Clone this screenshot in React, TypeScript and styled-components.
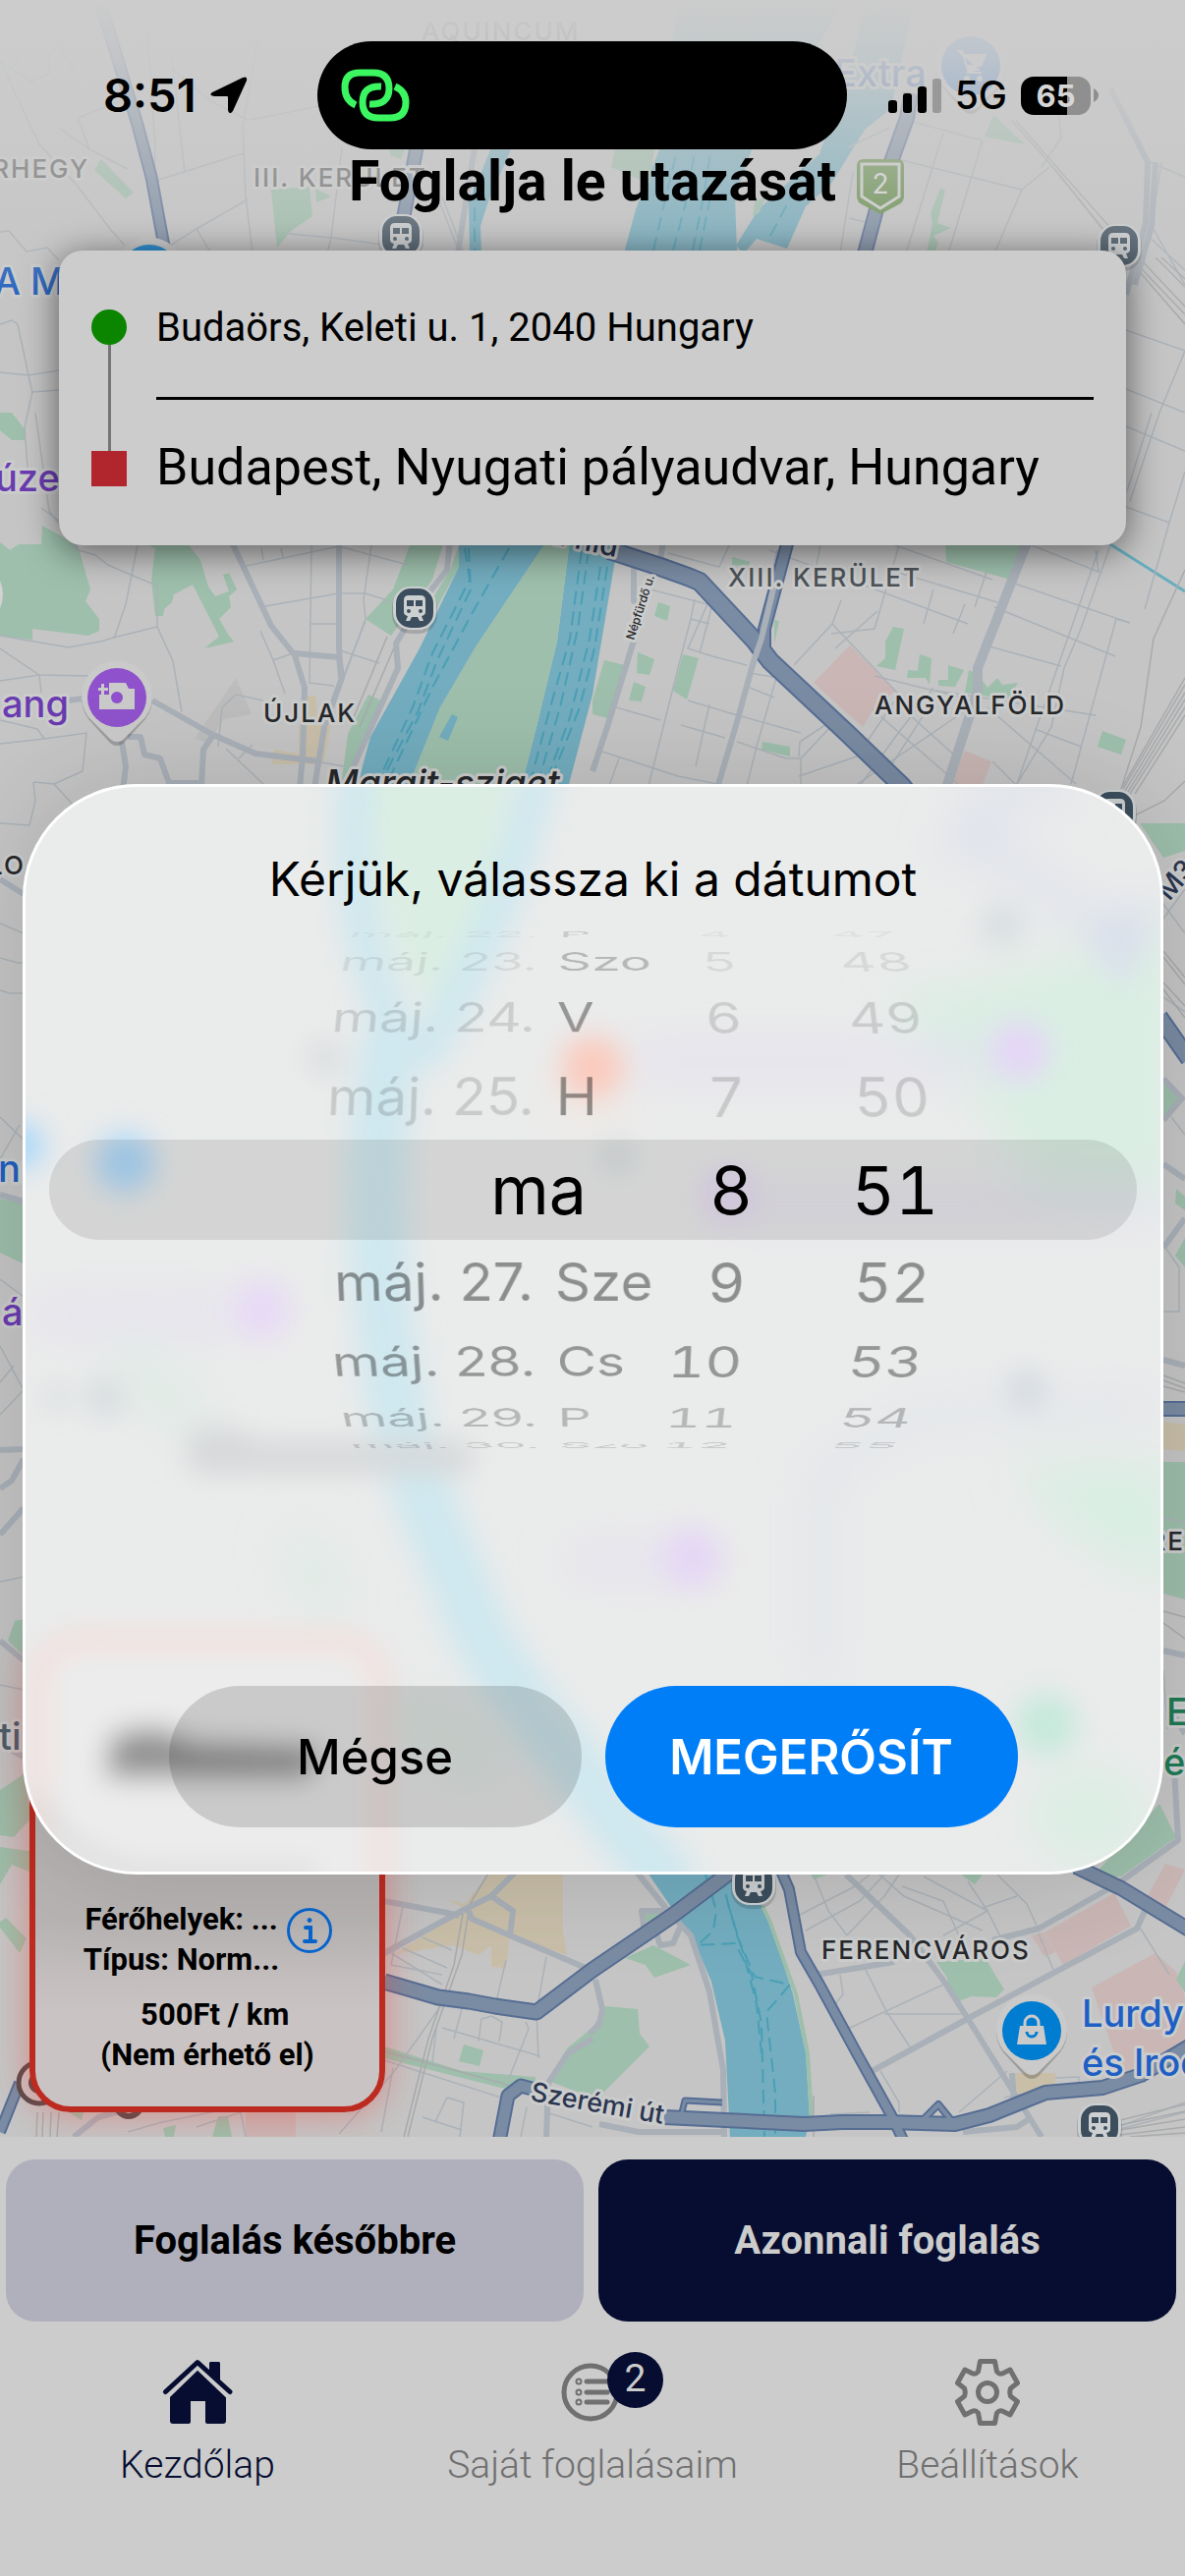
import * as React from "react"
import styled, { createGlobalStyle } from "styled-components"

const GlobalStyle = createGlobalStyle`
  * { box-sizing: border-box; }
  body { margin: 0; background: #cccccc; }
  button { border: 0; padding: 0; margin: 0; font: inherit; cursor: pointer; }
  ul, h1, h2, p { margin: 0; padding: 0; font-weight: inherit; list-style: none; }
`

const roboto = "Roboto, 'Liberation Sans', sans-serif"
const inter = "Inter, 'Liberation Sans', sans-serif"

/* ---------- screen ---------- */

const Screen = styled.div`
  position: relative;
  display: flex;
  flex-direction: column;
  min-height: 100vh;
  overflow: hidden;
  background: #cccccc;
  font-family: ${roboto};
  color: #000000;
`

const Stage = styled.main`
  position: relative;
  flex: 1;
  display: flex;
  flex-direction: column;
  overflow: hidden;
`

const MapCanvas = styled.svg`
  position: absolute;
  inset: 0;
  width: 100%;
  height: 100%;
  font-family: ${inter};
`

const StageContent = styled.div`
  position: relative;
  flex: 1;
  display: flex;
  flex-direction: column;
`

/* ---------- status bar ---------- */

const StatusBar = styled.header`
  display: grid;
  grid-template-columns: 1fr 539px 1fr;
  padding: 42px 22px 0 0;
  font-family: ${inter};
`

const StatusSide = styled.div<{ $end?: boolean }>`
  display: flex;
  align-items: center;
  gap: 14px;
  justify-content: ${({ $end }) => ($end ? "flex-end" : "flex-start")};
  padding: ${({ $end }) => ($end ? "0 66px 0 0" : "0 0 0 105px")};
`

const Clock = styled.span`
  font-size: 47px;
  font-weight: 600;
  line-height: 56px;
`

const Network = styled.span`
  font-size: 39px;
  font-weight: 500;
  line-height: 48px;
`

const Island = styled.div`
  height: 110px;
  border-radius: 55px;
  background: #000000;
  display: flex;
  align-items: center;
  padding-left: 24px;
`

const Battery = styled.div`
  display: flex;
  align-items: center;
  gap: 3px;
`

const BatteryBody = styled.span`
  width: 71px;
  height: 39px;
  border-radius: 13px;
  display: flex;
  align-items: center;
  justify-content: center;
  background: linear-gradient(90deg, #000000 0 66%, #8f8f8f 66%);
  color: #d6d6d6;
  font-size: 31px;
  font-weight: 700;
  line-height: 39px;
`

/* ---------- route ---------- */

const Title = styled.h1`
  font-size: 57px;
  font-weight: 700;
  line-height: 66px;
  text-align: center;
`

const RouteCard = styled.section`
  margin: 37px 60px 0;
  padding: 60px 33px;
  display: flex;
  gap: 30px;
  border-radius: 24px;
  background: #cccccc;
  box-shadow: 0 6px 36px rgba(0, 0, 0, 0.55);
`

const RouteTrack = styled.div`
  width: 36px;
  display: flex;
  flex-direction: column;
  align-items: center;
`

const StartDot = styled.span`
  width: 36px;
  height: 36px;
  border-radius: 50%;
  background: #0b8500;
`

const TrackLine = styled.span`
  flex: 1;
  width: 3px;
  background: #757575;
`

const EndSquare = styled.span`
  width: 36px;
  height: 36px;
  background: #b1262d;
`

const RouteStops = styled.div`
  flex: 1;
  height: 180px;
  display: flex;
  flex-direction: column;
  justify-content: space-between;
`

const Stop = styled.p<{ $large?: boolean }>`
  font-size: ${({ $large }) => ($large ? 52 : 40)}px;
  line-height: 38px;
  white-space: nowrap;
`

const StopDivider = styled.span`
  height: 3px;
  background: #000000;
`

/* ---------- vehicle ---------- */

const VehicleCard = styled.section`
  width: 362px;
  min-height: 485px;
  margin: auto 0 25px 30px;
  padding: 32px 0;
  display: flex;
  flex-direction: column;
  justify-content: flex-end;
  border: 6px solid #bd2a20;
  border-radius: 42px;
  background: linear-gradient(180deg, #b8b4b4 60%, #cac3c3 80%);
  box-shadow: 0 0 36px rgba(230, 60, 50, 0.45);
  font-size: 31px;
  font-weight: 700;
  line-height: 41px;
  text-align: center;
`

const VehicleInfo = styled.div`
  display: flex;
  justify-content: center;
  gap: 7px;
  margin-bottom: 15px;
`

const VehicleLines = styled.div`
  width: 200px;
`

const Line = styled.p`
  white-space: pre;
`

const InfoButton = styled.button`
  height: 46px;
  margin-top: 9px;
  background: none;
`

/* ---------- footer ---------- */

const Footer = styled.footer`
  padding: 23px 0 89px;
`

const BookingActions = styled.div`
  display: grid;
  grid-template-columns: 1fr 1fr;
  gap: 15px;
  padding: 0 9px 0 6px;
`

const BookingButton = styled.button<{ $primary?: boolean }>`
  height: 165px;
  border-radius: 30px;
  background: ${({ $primary }) => ($primary ? "#060d30" : "#b0b0bd")};
  color: ${({ $primary }) => ($primary ? "#cccccc" : "#000000")};
  font-size: 40px;
  font-weight: 700;
`

const TabBar = styled.nav`
  display: grid;
  grid-template-columns: repeat(3, 1fr);
  margin-top: 36px;
`

const Tab = styled.a<{ $active?: boolean }>`
  display: flex;
  flex-direction: column;
  align-items: center;
  gap: 14px;
  color: ${({ $active }) => ($active ? "#060d30" : "#707070")};
  font-size: 39px;
  font-weight: 300;
  line-height: 48px;
  text-decoration: none;
`

const TabIcon = styled.span`
  position: relative;
  width: 72px;
  height: 72px;
  display: flex;
`

const Badge = styled.span`
  position: absolute;
  top: -5px;
  left: 51px;
  width: 57px;
  height: 57px;
  border-radius: 50%;
  background: #060d30;
  color: #cccccc;
  font-weight: 400;
  line-height: 54px;
  text-align: center;
`

/* ---------- date dialog ---------- */

const Overlay = styled.div`
  position: absolute;
  inset: 0;
  display: flex;
  align-items: center;
  padding: 84px 22px 0 23px;
`

const DialogShadow = styled.div`
  flex: 1;
  display: flex;
  border-radius: 116px;
  box-shadow: 0 0 110px rgba(0, 0, 0, 0.14);
`

const Dialog = styled.section`
  position: relative;
  flex: 1;
  overflow: hidden;
  padding: 64px 0 45px;
  border: 3px solid #ffffff;
  border-radius: 116px;
  background: #eaebeb;
  font-family: ${inter};
`

const Backdrop = styled.svg`
  position: absolute;
  inset: 0;
  width: 100%;
  height: 100%;
`

const DialogContent = styled.div`
  position: relative;
`

const DialogTitle = styled.h2`
  font-size: 48px;
  font-weight: 400;
  line-height: 60px;
  text-align: center;
`

const Wheel = styled.div`
  position: relative;
  height: 540px;
  margin-top: 16px;
  padding-right: 226px;
  display: grid;
  grid-template-columns: 1fr 101px 189px;
  perspective: 2000px;
`

const Lens = styled.div`
  position: absolute;
  inset: 219px 24px;
  border-radius: 51px;
  background: rgba(0, 0, 0, 0.095);
`

const Column = styled.ul`
  display: grid;
  align-items: center;
  transform-style: preserve-3d;
`

const wheelAlpha = [1, 0.4, 0.36, 0.22, 0.14]

const Option = styled.li<{ $step: number; $past?: boolean }>`
  grid-area: 1 / 1;
  justify-self: end;
  display: flex;
  font-size: ${({ $step }) => ($step === 0 ? 68 : 57)}px;
  line-height: 80px;
  white-space: nowrap;
  color: rgba(0, 0, 0, ${({ $step, $past }) => wheelAlpha[Math.abs($step)] * ($past ? 0.35 : 1)});
  transform: translateZ(-300px) rotateX(${({ $step }) => $step * -18.5}deg) translateZ(300px);
`

const NumberOption = styled(Option)`
  padding-right: ${({ $step }) => ($step === 0 ? 0 : 6)}px;
  font-size: ${({ $step }) => ($step === 0 ? 68 : 60)}px;
  font-variant-numeric: tabular-nums;
`

const Weekday = styled.span<{ $step: number }>`
  width: 100px;
  margin-left: 22px;
  color: rgba(0, 0, 0, ${({ $step }) => wheelAlpha[Math.abs($step)]});
`

const Today = styled.span`
  padding-right: 68px;
`

const DialogActions = styled.div`
  display: flex;
  justify-content: center;
  gap: 24px;
  margin-top: 235px;
`

const DialogButton = styled.button<{ $primary?: boolean }>`
  width: 420px;
  height: 144px;
  border-radius: 72px;
  background: ${({ $primary }) => ($primary ? "#007ef8" : "rgba(0, 0, 0, 0.14)")};
  color: ${({ $primary }) => ($primary ? "#ffffff" : "#000000")};
  font-size: 49px;
  font-weight: ${({ $primary }) => ($primary ? 600 : 500)};
`

/* ---------- map ---------- */

const parks = [
  "103,162 136,196 128,202 96,173",
  "276,193 315,190 318,220 296,235 282,252",
  "321,192 337,200 322,206",
  "397,152 412,152 408,162 397,158",
  "626,152 666,152 661,187 622,170",
  "768,205 780,200 772,217 766,220",
  "957,192 962,193 954,227 968,232 950,240 955,247 951,258 943,258 949,227 947,217",
  "1011,117 1043,147 1002,139",
  "0,420 12,420 25,437 25,448 12,448 0,438",
  "0,552 10,560 19,554 42,554 43,535 79,555 92,600 87,612 101,630 101,642 90,647 33,640 33,651 0,647",
  "140,550 188,550 204,570 212,597 219,607 233,602 227,585 233,583 241,600 233,607 235,618 223,630 233,647 238,653 208,660 223,648 213,628 196,595 177,605 175,613 167,620 166,627 158,627 154,590 158,558",
  "419,550 452,550 440,590 425,610 398,647 372,630 400,600",
  "467,555 458,580 440,610 430,645 467,577",
  "375,707 388,713 360,780 347,800 354,747",
  "962,550 1041,550 1029,590 963,572",
  "745,567 764,572 760,577 745,575",
  "670,613 682,617 679,632 666,627",
  "649,664 666,671 661,687 648,685",
  "695,666 711,670 699,712 685,703",
  "645,694 657,699 653,714 640,713",
  "615,672 636,677 618,731 603,727 603,713",
  "909,638 920,640 911,682 892,678 901,670 901,653",
  "936,666 948,670 946,697 942,690 923,690 924,682 934,683",
  "965,677 981,682 972,699 955,698 955,692 965,692",
  "986,682 996,687 1005,700 1015,690 1020,697 1036,695 1026,712 982,705",
  "776,755 804,760 804,770 775,763",
  "1122,744 1146,753 1141,768 1117,760",
  "788,631 793,632 788,655",
  "1160,838 1206,838 1206,866 1184,873",
  "1184,1098 1202,1117 1184,1138",
  "1197,1210 1206,1218 1206,1232 1196,1225",
  "1206,1260 1196,1278 1206,1290",
  "1184,1488 1206,1488 1206,1628 1184,1622",
  "0,1220 23,1225 23,1286 0,1275",
  "15,1650 24,1648 24,1685 8,1670",
  "0,1822 24,1806 32,1850 14,1870 0,1868",
  "0,1880 30,1884 30,1905 12,1898 0,1918",
  "6,1952 27,1973 20,1988 0,1962 0,1956",
  "636,1993 665,1980 703,2000 666,2013 657,2000",
  "652,1945 672,1942 690,1955 660,1960",
  "616,2042 649,2045 651,2070 661,2083 611,2133 603,2135 558,2118 577,2085 603,2064",
  "953,1997 1003,1993 1011,2007 1022,2025 1014,2033 988,2032 974,2038 966,2027 964,2013",
  "1110,1912 1180,1836 1197,1870 1141,1910",
  "978,1908 1000,1908 992,1918",
  "825,1908 842,1908 828,1913",
  "391,2083 470,2108 520,2112 545,2114 545,2126 522,2128 391,2095",
  "472,2081 492,2087 488,2103 467,2098",
  "1206,1996 1197,2015 1206,2028",
  "166,2166 179,2163 177,2175 168,2175",
  "222,2154 232,2154 236,2175 216,2175",
  "70,2150 85,2150 83,2158",
]

const blocks = [
  "865,657 911,703 888,723 878,740 828,695",
  "982,764 1009,775 999,802 966,802",
  "1134,1927 1151,1960 1082,2000 1063,1967",
  "1050,1970 1062,1967 1074,1987 1063,1992",
  "1186,1897 1206,1903 1186,1942 1168,1930",
  "1176,1988 1197,2007 1206,2033 1206,2087 1141,2110 1111,2023",
  "250,2150 301,2150 301,2175 250,2175",
]

const sands = [
  "313,708 321,708 323,730 337,737 329,778 277,778 279,763 304,767 304,740",
  "454,1933 473,1938 500,1905 573,1905 573,1967 577,1990 554,1982 519,1970 515,2003 500,2002 500,1980 487,1990 461,1980 402,1989 473,1943",
  "1028,2110 1074,2110 1074,2123 1038,2135",
  "1184,1447 1206,1450 1206,1477 1184,1475",
]

const waters = [
  "690,0 860,0 770,150 672,152",
  "672,150 647,213 635,258 750,258 748,200 766,150",
  "930,0 907,110 880,132 846,187 820,210 801,253 770,243 757,258 749,250 772,213 834,157 872,43 880,0",
  "500,150 521,150 508,180 497,205 489,230 490,258 478,258 477,205 486,185",
  "467,550 557,550 485,657 448,720 415,802 363,802 377,750 427,660 467,577",
  "580,550 622,550 626,570 603,707 578,802 530,802 546,740 567,653",
  "655,1900 740,1900 776,1940 784,1957 807,2030 820,2090 824,2157 820,2175 743,2175 738,2077 724,2017 707,1977 691,1953",
]

const lanes = [
  "M665 255 L680 190 L690 150", "M685 255 L697 210 L708 150", "M705 255 L716 200 L724 150", "M712 255 L724 195",
  "M784 240 L800 210 L820 165", "M483 190 L483 258",
  "M473 558 L478 590 L440 665 L420 720 L385 795", "M477 558 L479 600 L445 672 L425 725 L388 795",
  "M518 558 L480 625 L440 700 L395 795",
  "M592 560 L580 650 L560 720 L540 795", "M599 560 L588 640 L570 720 L548 795", "M618 577 L605 660 L590 720 L560 795", "M611 577 L600 650 L580 730 L556 795",
  "M718 1908 L729 1945 L726 1965 L710 1980 L748 1978 L765 2010 L775 2060 L778 2175",
  "M733 1908 L750 1970 L768 2012 L804 2020 L780 2048 L789 2130 L789 2175",
  "M740 1935 L757 1990 L770 2040 L775 2090",
]

const streets = [
  "M0 62 L40 147 L77 187 L112 233 L127 250", "M49 55 L50 75 L32 83 L0 62", "M49 55 L60 48 L75 72", "M91 152 L60 130", "M79 120 L91 152 L130 172", "M79 120 L130 100",
  "M150 30 L158 150 L157 184", "M158 184 L248 156", "M175 60 L188 176", "M247 125 L250 200 L257 258", "M248 125 L262 40", "M254 122 L330 107", "M175 70 L215 103 L252 122",
  "M252 203 L200 233 L173 250", "M200 233 L215 258", "M294 238 L338 242 L390 249", "M348 150 L337 242 L333 258",
  "M0 236 L9 235 L27 256 L48 252 L60 265", "M0 330 L12 326 L18 330 L29 382 L60 377", "M0 379 L29 382 L33 399 L60 397", "M33 399 L25 435 L30 500",
  "M36 420 L50 520 L80 560", "M445 200 L468 258", "M450 200 L472 258",
  "M925 123 L1000 143", "M960 135 L922 258", "M1000 143 L965 258", "M905 160 L1040 193 L1068 170", "M1040 193 L1012 258", "M868 175 L855 258", "M864 222 L880 226", "M863 150 L905 130",
  "M1168 240 L1206 275", "M1170 165 L1206 180", "M1182 165 L1172 230 L1206 290", "M1146 336 L1206 357 L1180 420", "M1146 396 L1206 420", "M1075 90 L1080 140 L1060 170",
  "M0 647 L70 659 L106 652 L115 649 L160 638", "M140 555 L128 615 L116 650", "M42 517 L60 530 L80 560 L97 565 L110 575 L133 585 L160 596 L160 638 L176 673 L185 725",
  "M0 660 L40 687 L90 688", "M0 693 L40 687 L42 705", "M0 757 L45 752 L88 746 L84 785 L55 798", "M34 796 L55 798 L75 820", "M34 796 L36 815 L30 840 L0 838", "M0 733 L38 742 L45 752",
  "M265 642 L278 672 L290 706", "M317 555 L315 695 L340 698", "M315 635 L343 635", "M270 617 L345 604 L372 604 L400 613", "M378 555 L370 610 L372 630 L350 690", "M372 632 L345 700",
  "M240 707 L226 720 L222 760", "M240 707 L268 713", "M250 576 L345 556 L415 575", "M230 762 L270 800", "M278 672 L298 665", "M346 662 L386 675", "M266 558 L268 570", "M286 558 L288 567", "M322 775 L350 780", "M257 758 L243 772",
  "M680 563 L732 577 L742 555", "M662 600 L720 615 L700 660 L725 668 L760 677", "M707 610 L703 630 L690 680 L660 800", "M703 630 L722 635", "M725 615 L712 665",
  "M763 685 L792 690", "M763 700 L788 710", "M627 720 L672 733", "M693 738 L738 751", "M700 713 L747 727 L815 746", "M722 717 L708 780", "M610 764 L690 790 L730 798", "M750 755 L800 772 L815 772", "M630 772 L620 800",
  "M790 690 L770 760 L760 800", "M783 560 L985 635", "M835 555 L826 600", "M915 555 L890 640 L846 645", "M856 611 L847 635 L808 677", "M847 635 L915 707", "M893 622 L850 660", "M950 600 L940 635", "M982 615 L970 645",
  "M911 555 L1010 590", "M1004 582 L992 618", "M905 580 L1015 613", "M1030 593 L1150 634", "M1118 560 L1090 640 L1055 740 L1035 798", "M1130 555 L1100 640 L1083 680 L1070 740 L1035 798", "M1150 634 L1136 630 L1090 798",
  "M1012 618 L1135 668", "M1007 658 L1080 678", "M890 688 L1000 715", "M953 703 L1115 728", "M1053 742 L1100 760", "M915 707 L872 770 L813 790", "M850 735 L815 772 L815 800", "M875 800 L915 745 L950 700",
  "M888 722 L975 798", "M925 727 L975 772", "M945 720 L900 790", "M1005 720 L1095 798", "M1010 775 L1035 800", "M980 725 L870 800", "M855 728 L814 755 L813 770",
  "M1180 420 L1150 510", "M1172 420 L1147 500", "M1146 434 L1206 459", "M1146 516 L1190 532 L1206 480", "M1190 532 L1165 620", "M1115 560 L1118 582 L1050 555",
  "M0 940 L24 950", "M0 975 L18 980 L24 980", "M0 1008 L10 1011 L24 1011", "M0 1137 L24 1160", "M20 1145 L0 1180", "M0 1302 L24 1320", "M0 1370 L24 1415", "M0 1440 L24 1415", "M0 1407 L14 1390", "M0 1610 L24 1605", "M0 1715 L24 1720",
  "M1184 920 L1206 950", "M1206 905 L1184 935", "M1184 1015 L1206 1030", "M1192 1137 L1206 1155", "M1184 1267 L1200 1290 L1200 1335 L1184 1335", "M1184 1545 L1206 1550", "M1184 1700 L1188 1760",
  "M410 1940 L398 2000", "M398 1988 L450 2020", "M430 1972 L460 1985", "M398 2000 L450 2010", "M410 1983 L455 2003", "M515 1995 L504 2042", "M556 1992 L546 2048 L548 2095", "M450 2064 L550 2093", "M472 2037 L462 2075", "M444 2065 L440 2100", "M487 2078 L490 2055 L500 2052 L511 2058 L508 2078", "M535 2058 L538 2065 L517 2118",
  "M450 2040 L400 2110 L345 2172", "M443 2160 L455 2135 L472 2140 L468 2175", "M536 2145 L530 2175", "M556 2150 L603 2165", "M391 2097 L510 2135", "M400 2105 L388 2170", "M430 2155 L470 2168", "M200 2165 L245 2150 L250 2175", "M130 2170 L165 2160 L240 2145",
  "M828 1908 L843 1945 L862 1970", "M812 1950 L870 1920 L885 1908", "M900 1908 L875 1935 L820 1965", "M862 1970 L900 1930 L915 1908", "M895 1908 L920 1930 L1000 1965", "M918 1920 L960 1935 L976 1970", "M940 1910 L1005 1945 L1020 1975", "M985 1915 L1005 1945 L960 1970", "M1035 1930 L1000 1942", "M1015 1908 L1045 1938 L1055 1960",
  "M880 2003 L902 2047 L927 2085", "M863 2065 L960 2020", "M850 2040 L858 2030 L855 2010", "M900 2050 L985 2050", "M896 2108 L915 2140 L915 2150", "M976 2150 L1025 2108", "M1074 2115 L1098 2114 L1098 2125", "M1160 1962 L1190 2010", "M1057 1968 L1072 2005", "M1022 2135 L1115 2118", "M845 2152 L885 2150",
  "M1020 2140 L1178 2110", "M1110 2175 L1206 2140", "M1120 2172 L1206 2150",
]

const rails = [
  "M1030 123 L1074 173 L1120 230 L1206 320", "M1034 123 L1078 173 L1124 225 L1206 312", "M1074 173 L1126 238 L1206 330", "M1176 262 L1206 292", "M1182 262 L1206 284",
  "M1206 580 L1174 650 L1161 740 L1141 803", "M1206 690 L1141 803", "M1206 697 L1143 803", "M1206 705 L1145 805", "M1206 712 L1148 806", "M1206 720 L1150 808", "M1206 728 L1155 808",
  "M1155 830 L1185 815 L1206 795", "M394 648 L360 730", "M403 655 L366 740",
  "M1184 968 L1206 995", "M1184 974 L1206 1002", "M1184 1000 L1206 1024", "M1184 1007 L1206 1036", "M1184 1400 L1206 1408", "M1184 1405 L1206 1413", "M1184 1411 L1206 1417", "M1184 1640 L1206 1646", "M1184 1652 L1206 1668",
  "M477 1945 L470 1990 L440 2075 L415 2175", "M471 1948 L462 2000 L436 2075 L411 2175", "M498 1905 L474 1945", "M391 2088 L510 2120 L560 2140",
  "M38 2150 L37 2175", "M44 2150 L43 2175", "M60 2150 L58 2175", "M52 2150 L51 2175", "M828 2133 L828 2175",
  "M1140 2158 L1206 2142", "M1140 2163 L1206 2149", "M1140 2168 L1206 2157", "M1140 2173 L1206 2165", "M1150 2175 L1206 2171",
]

const avenues = [
  "M235 550 L276 637 L300 667 L310 700 L308 770 L305 802", "M300 665 L345 669 L348 690 L330 740 L320 802", "M345 550 L345 660 L347 690",
  "M458 550 L455 580 L425 618 L403 655 L405 680 L380 735 L350 802", "M155 713 L217 748 L260 767 L325 775", "M217 748 L207 763 L205 800", "M124 755 L128 780 L125 805",
  "M130 750 L143 750 L147 768 L163 772 L172 797 L207 797", "M70 713 L84 711", "M793 560 L775 650 L765 680 L750 735 L730 802", "M645 570 L645 612 L650 616", "M645 652 L618 740 L603 785",
  "M675 550 L670 585", "M466 258 L475 200 L483 150", "M1130 90 L1168 165 L1166 227 L1146 300", "M1176 165 L1172 230 L1155 290",
  "M0 895 L24 910", "M0 1216 L24 1223", "M0 1476 L24 1475", "M0 1515 L12 1507 L24 1485", "M0 1562 L24 1535", "M0 1670 L24 1690", "M0 1775 L24 1788",
  "M1184 1098 L1203 1118 L1184 1140", "M1184 1185 L1206 1200", "M1184 1270 L1206 1240", "M1184 1384 L1206 1390", "M1184 1680 L1206 1685", "M1192 1740 L1206 1765",
  "M391 1935 L455 1947 L467 1950", "M391 1988 L470 1945 L500 1930 L526 1904", "M500 1930 L522 1945 L519 1970", "M477 1945 L480 1953 L519 1970 L603 2006", "M603 2075 L578 2090 L558 2120 L556 2175",
  "M645 1902 L684 1950 L703 1970 L722 2027 L736 2107 L737 2175", "M684 1945 L653 1945 L655 1960 L668 1965", "M668 1968 L672 1980 L685 1978 L692 1962", "M606 2015 L613 2045 L610 2060 L600 2070", "M610 2162 L650 2170 L735 2170",
  "M884 2110 L988 2053 L1157 1963 L1166 1943", "M830 2010 L910 1997", "M1010 1975 L1057 1963 L1138 1917 L1199 1873 L1195 1800", "M861 1908 L926 1970 L961 2017 L984 2053 L1030 2127 L1060 2175", "M1030 2110 L1032 2140", "M980 2170 L1035 2165 L1050 2155", "M75 2175 L100 2155 L125 2148",
]

const highways = [
  { d: "M100 -5 L140 127 L154 180 L168 256", w: 10 },
  { d: "M424 150 L410 225", w: 12 },
  { d: "M927 95 L923 120 L899 187 L880 258", w: 13 },
  { d: "M802 550 L778 640 L778 664", w: 11 },
  { d: "M620 560 L672 577 L700 587 L712 592 L768 652 L784 673 L864 748 L918 800 L930 815", w: 17 },
  { d: "M1180 1035 L1210 1078", w: 15 },
  { d: "M1180 1434 L1210 1434", w: 13 },
  { d: "M0 2170 L20 2120", w: 9 },
  { d: "M391 2017 L446 2033 L477 2037 L504 2042 L546 2048 L603 2005 L684 1950 L748 1902", w: 14 },
  { d: "M508 2180 L517 2133 L530 2123 L545 2127", w: 12 },
  { d: "M735 2140 L697 2138 L694 2150", w: 4 },
  { d: "M793 1900 L803 1923 L815 1987 L834 2020 L872 2090 L907 2153 L920 2180", w: 9 },
  { d: "M937 2160 L955 2142 L968 2158", w: 5 },
  { d: "M1095 1900 L1141 1922 L1210 1964", w: 13 },
  { d: "M676 2155 L818 2162 L857 2160 L903 2160 L972 2162 L1007 2153 L1064 2130 L1122 2125 L1161 2112 L1210 2083", w: 13 },
]

interface LabelProps {
  x: number
  y: number
  fill?: string
  size?: number
  wide?: boolean
  end?: boolean
  rotate?: number
  italic?: boolean
  children: React.ReactNode
}

const Label = ({ x, y, fill = "#26282b", size = 38, wide, end, rotate, italic, children }: LabelProps) => (
  <text
    x={x}
    y={y}
    fill={fill}
    fontSize={wide ? 26 : size}
    fontWeight={500}
    letterSpacing={wide ? 2 : undefined}
    fontStyle={italic ? "italic" : undefined}
    textAnchor={end ? "end" : "start"}
    transform={rotate ? `rotate(${rotate} ${x} ${y})` : undefined}
    stroke="#cbcccc"
    strokeWidth={6}
    strokeLinejoin="round"
    paintOrder="stroke"
  >
    {children}
  </text>
)

const TrainMarker = ({ x, y }: { x: number; y: number }) => (
  <g transform={`translate(${x} ${y})`}>
    <rect x={-23} y={-20} width={46} height={46} rx={19} fill="#000" opacity={0.15} />
    <rect x={-22} y={-22} width={44} height={44} rx={18} fill="#cdd0d1" />
    <rect x={-19} y={-20} width={38} height={40} rx={15} fill="#3c4e5d" />
    <path d="M-11 -8 Q-11 -13 -6 -13 H6 Q11 -13 11 -8 V4 Q11 7 7 8 L9 13 H5 L3 9 H-3 L-5 13 H-9 L-7 8 Q-11 7 -11 4 Z" fill="#cdd0d1" />
    <path d="M-8 -8 H-1 V-2 H-8 Z M1 -8 H8 V-2 H1 Z" fill="#3c4e5d" />
    <circle cx={-6} cy={3} r={2} fill="#3c4e5d" />
    <circle cx={6} cy={3} r={2} fill="#3c4e5d" />
  </g>
)

const Pin = ({ x, y, fill, children }: { x: number; y: number; fill: string; children?: React.ReactNode }) => (
  <g transform={`translate(${x} ${y})`}>
    <path d="M0 49 Q-5 49 -9 44 L-29 22 A36 36 0 1 1 29 22 L9 44 Q5 49 0 49 Z" fill="#000" opacity={0.2} />
    <path d="M0 45 Q-5 45 -9 40 L-29 20 A36 36 0 1 1 29 20 L9 40 Q5 45 0 45 Z" fill="#cacaca" />
    <circle r={30} fill={fill} />
    {children}
  </g>
)

const CityMap = () => (
  <MapCanvas viewBox="0 0 1206 2175" preserveAspectRatio="xMidYMid slice" aria-hidden="true">
    <defs>
      <linearGradient id="top-fade" x1="0" y1="0" x2="0" y2="1">
        <stop offset="0" stopColor="#cccccc" />
        <stop offset="0.2" stopColor="#cccccc" stopOpacity={0.87} />
        <stop offset="0.55" stopColor="#cccccc" stopOpacity={0.5} />
        <stop offset="1" stopColor="#cccccc" stopOpacity={0} />
      </linearGradient>
    </defs>
    <rect width={1206} height={2175} fill="#c5c5c5" />
    <path d="M198 752 L240 690 L256 727 L228 732 L212 756 Z" fill="#bdbdbd" />
    {waters.map((points) => <polygon key={points} points={points} fill="#73adbf" />)}
    <polygon points="557,550 580,550 567,653 546,740 530,802 415,802 448,720 485,657" fill="#9dbfab" />
    <polygon points="460,727 466,730 456,754 447,750" fill="#73adbf" />
    {sands.map((points) => <polygon key={points} points={points} fill="#c9bfa9" />)}
    {blocks.map((points) => <polygon key={points} points={points} fill="#c9b6b5" />)}
    {parks.map((points) => <polygon key={points} points={points} fill="#9dbfab" />)}
    <g fill="none" stroke="#4a9fb6" strokeWidth={2} strokeDasharray="14 7">
      {lanes.map((d) => <path key={d} d={d} />)}
    </g>
    <path d="M776 1940 L784 1957 L810 2030 L822 2090 L826 2157" fill="none" stroke="#9dbfab" strokeWidth={4} />
    <path d="M1130 554 L1206 602" stroke="#68adbd" strokeWidth={3} />
    <path d="M12 70 L21 60" stroke="#a5c3cc" strokeWidth={3} />
    <g fill="none" stroke="#abb2b8" strokeWidth={1.5}>
      {streets.map((d) => <path key={d} d={d} />)}
    </g>
    <g fill="none" stroke="#a8aaac" strokeWidth={1.5}>
      {rails.map((d) => <path key={d} d={d} />)}
    </g>
    <g fill="none" stroke="#a9b0b8" strokeWidth={6} strokeLinejoin="round">
      {avenues.map((d) => <path key={d} d={d} />)}
    </g>
    <path d="M1046 550 L995 680 L995 703 L963 802" fill="none" stroke="#a9b0b8" strokeWidth={10} />
    <g fill="none" stroke="#566d94" strokeLinejoin="round">
      {highways.map(({ d, w }) => <path key={d} d={d} strokeWidth={w + 3} />)}
    </g>
    <g fill="none" stroke="#7a8ca3" strokeLinejoin="round">
      {highways.map(({ d, w }) => <path key={d} d={d} strokeWidth={w - 1} />)}
    </g>
    <path d="M788 595 L775 650 L766 676" fill="none" stroke="#a9b0b8" strokeWidth={6} />
    <circle cx={40} cy={2120} r={21} fill="#cbc4c4" stroke="#564c4c" strokeWidth={5} />
    <circle cx={40} cy={2120} r={11} fill="#564c4c" />
    <circle cx={131} cy={2141} r={13} fill="none" stroke="#564c4c" strokeWidth={6} />

    <Label x={429} y={41} wide fill="#555555">AQUINCUM</Label>
    <Label x={849} y={88} fill="#3f68b8">Extra</Label>
    <Label x={91} y={181} wide end fill="#5c5c5c">TÁBORHEGY</Label>
    <Label x={258} y={190} wide fill="#5f5f5f">III. KERÜLET</Label>
    <Label x={-6} y={300} fill="#1f5fbf">A M</Label>
    <Label x={-5} y={500} fill="#6a3bb0">úzeum</Label>
    <Label x={2} y={730} fill="#6a3bb0">ang</Label>
    <Label x={268} y={735} wide>ÚJLAK</Label>
    <Label x={331} y={810} size={37} italic>Margit-sziget</Label>
    <Label x={627} y={567} size={30} end rotate={12} fill="#2a3550">Árpád híd</Label>
    <Label x={645} y={652} size={12} rotate={-72}>Népfürdő u.</Label>
    <Label x={741} y={597} wide fill="#4d5257">XIII. KERÜLET</Label>
    <Label x={890} y={727} wide>ANGYALFÖLD</Label>
    <Label x={-12} y={890} wide>LO</Label>
    <Label x={-2} y={1203} fill="#1f5fbf">nn</Label>
    <Label x={2} y={1349} fill="#6a3bb0">á</Label>
    <Label x={-1} y={1781} fill="#4a5f6b">ti</Label>
    <Label x={1190} y={918} size={28} rotate={-50} fill="#2a3550">M3</Label>
    <Label x={1206} y={1578} wide end>RE</Label>
    <Label x={1187} y={1756} fill="#1f7a55">E</Label>
    <Label x={1184} y={1807} fill="#1f7a55">é</Label>
    <Label x={836} y={1994} wide>FERENCVÁROS</Label>
    <Label x={1101} y={2063} fill="#1d5fc4">Lurdy</Label>
    <Label x={1101} y={2113} fill="#1d5fc4">és Irod</Label>
    <Label x={539} y={2138} size={27} rotate={10} fill="#2a3550">Szerémi út</Label>

    <g transform="translate(896 188)">
      <path d="M-24 -19 Q-24 -26 -17 -26 H17 Q24 -26 24 -19 V12 Q24 17 19 20 L0 30 L-19 20 Q-24 17 -24 12 Z" fill="#5f8a42" />
      <path d="M-19 -21 H19 V12 L0 24 L-19 12 Z" fill="#5f8a42" stroke="#d0d0d0" strokeWidth={3} />
      <text y={9} textAnchor="middle" fontSize={28} fill="#dddddd">2</text>
    </g>
    <TrainMarker x={408} y={240} />
    <TrainMarker x={1139} y={250} />
    <TrainMarker x={422} y={619} />
    <TrainMarker x={1134} y={826} />
    <TrainMarker x={767} y={1917} />
    <TrainMarker x={1119} y={2163} />
    <circle cx={-31} cy={605} r={34} fill="#d2d2d2" />
    <Pin x={152} y={279} fill="#007cd0" />
    <Pin x={119} y={710} fill="#8f52cc">
      <path d="M-18 -3 H-8 V-15 H9 L12 -9 H18 V12 H-18 Z M-16 -14 H-13 V-10 H-9 V-7 H-13 V-3 H-16 V-7 H-19 V-10 H-16 Z" fill="#cacaca" />
      <circle r={6} fill="#8f52cc" />
    </Pin>
    <Pin x={1050} y={2067} fill="#007cd0">
      <path d="M-12 -5 H12 L15 14 H-15 Z" fill="#cacaca" />
      <path d="M-7 -4 V-8 A7 7 0 0 1 7 -8 V-4" fill="none" stroke="#cacaca" strokeWidth={3} />
      <path d="M-5 1 A5 5 0 0 0 5 1" fill="none" stroke="#007cd0" strokeWidth={3} />
    </Pin>
    <Pin x={988} y={67} fill="#3a7fd0">
      <path d="M-14 -15 H-9 L-3 4 H9 M-8 -11 H15 L10 0 H-5 M-3 4 V7 H11" fill="#cacaca" stroke="#cacaca" strokeWidth={2} />
      <circle cx={-4} cy={13} r={3} fill="#cacaca" />
      <circle cx={9} cy={13} r={3} fill="#cacaca" />
    </Pin>
    <rect width={1206} height={320} fill="url(#top-fade)" />
  </MapCanvas>
)

/* frosted colours of the map showing through the dialog */
const FrostedMap = () => (
  <Backdrop viewBox="23 798 1161 1110" preserveAspectRatio="none" aria-hidden="true">
    <defs>
      <filter id="soft" x="-30%" y="-30%" width="160%" height="160%">
        <feGaussianBlur stdDeviation="14" />
      </filter>
      <filter id="softer" x="-30%" y="-30%" width="160%" height="160%">
        <feGaussianBlur stdDeviation="24" />
      </filter>
    </defs>
    <g filter="url(#softer)">
      <path d="M980 1000 L1200 940 V1220 H1060 L1000 1120 L900 1010 Z" fill="#daeee3" />
      <path d="M1030 1490 H1200 V1620 L1100 1570 Z" fill="#d9eee3" />
      <path d="M580 1590 H720 M640 1078 H1010 M30 1338 H240 M720 1225 H1184" stroke="#e4e0ef" strokeWidth={26} />
      <path d="M120 1380 L200 1450 M300 1570 L340 1640 M400 1740 L500 1800" stroke="#dcece4" strokeWidth={36} />
      <path d="M1184 1430 L940 1440 L835 1500 V1720" fill="none" stroke="#dfe3ea" strokeWidth={20} />
      <ellipse cx={1110} cy={1850} rx={60} ry={50} fill="#dbeee4" />
      <path d="M560 1090 h80 v60 h-80 Z" fill="#eeeae6" />
      <path d="M970 870 L1010 810 L1090 795 M980 840 L1150 960 L1170 910" fill="none" stroke="#d9deec" strokeWidth={20} />
    </g>
    <g filter="url(#soft)">
      <path d="M380 780 H520 C505 900 470 980 440 1030 C400 980 375 900 380 780 Z" fill="#dbeee3" />
      <path d="M362 780 C350 900 370 980 405 1060 M550 780 C520 900 480 1000 425 1080" fill="none" stroke="#cfe8ef" strokeWidth={38} />
      <path d="M400 1050 C375 1150 380 1300 398 1400 C410 1490 440 1550 470 1620 C500 1710 560 1760 615 1840 L690 1930" fill="none" stroke="#cfe8ef" strokeWidth={60} />
      <path d="M1110 940 L1170 930 L1145 1010 Z" fill="#dae0ec" />
      <circle cx={603} cy={1085} r={32} fill="#fbcabd" />
      <circle cx={1040} cy={1068} r={30} fill="#e5d6f8" />
      <circle cx={125} cy={1182} r={30} fill="#add9fb" />
      <circle cx={18} cy={1165} r={24} fill="#a9d8fb" />
      <circle cx={264} cy={1333} r={30} fill="#e7daf7" />
      <circle cx={705} cy={1587} r={30} fill="#e5d7f6" />
      <circle cx={742} cy={1215} r={28} fill="#e6dbf3" />
      <circle cx={1067} cy={1757} r={32} fill="#c6e9dc" />
      <circle cx={105} cy={1423} r={20} fill="#d7dcdf" />
      <circle cx={55} cy={1423} r={14} fill="#d9dee0" />
      <circle cx={628} cy={1175} r={18} fill="#d8dddf" />
      <circle cx={330} cy={1075} r={18} fill="#d9dddf" />
      <circle cx={1022} cy={940} r={22} fill="#d8dee1" />
      <circle cx={1047} cy={1415} r={20} fill="#d4dae0" />
      <path d="M190 1455 H240 L260 1468 H480 V1500 H190 Z" fill="#d6d8d9" />
      <rect x={36} y={1672} width={350} height={480} rx={42} fill="#ececec" stroke="#f8d2cd" strokeWidth={10} />
      <path d="M110 1770 Q160 1750 190 1775 L320 1780 Q330 1815 290 1812 H105 Z" fill="#929292" />
      <path d="M34 1830 Q60 1900 150 1910 H320" fill="none" stroke="#b5b5b5" strokeWidth={6} />
    </g>
  </Backdrop>
)

/* ---------- icons ---------- */

const HomeIcon = () => (
  <svg width={72} height={72} viewBox="-1 -3 72 72" fill="currentColor">
    <path d="M7 36 L35 9 L64 36 V62 Q64 65 61 65 H45 Q43 65 43 63 V42 H28 V63 Q28 65 26 65 H10 Q7 65 7 62 Z" />
    <path d="M47 4 Q47 2 49 2 H56 Q58 2 58 4 V25 L47 14 Z" />
    <path d="M2.500 34 L35 2.500 L68 34" fill="none" stroke="#cccccc" strokeWidth={12} />
    <path d="M47 4 Q47 2 49 2 H56 Q58 2 58 4 V23 L47 12 Z" />
    <path d="M2.500 32.500 L35 2.500 L68 32.500" fill="none" stroke="currentColor" strokeWidth={5} strokeLinecap="round" strokeLinejoin="round" />
  </svg>
)

const ListIcon = () => (
  <svg width={72} height={72} viewBox="-36 -36 72 72" fill="none" stroke="currentColor">
    <circle cx={-2} r={27} strokeWidth={5} />
    {[-11, 0, 10].map((y) => (
      <g key={y}>
        <circle cx={-14} cy={y} r={2.500} strokeWidth={2} />
        <path d={`M-6 ${y} H15`} strokeWidth={5} strokeLinecap="round" />
      </g>
    ))}
  </svg>
)

const GearIcon = () => (
  <svg width={72} height={72} viewBox="-36 -36 72 72" fill="none" stroke="currentColor" strokeWidth={5} strokeLinejoin="round">
    <path d="M-7.500 -31.500 H7.500 L9.500 -21 Q12 -18 15 -19 L23 -23 L30.500 -9.500 L23.500 -4 Q22 0 23.500 4 L30.500 9.500 L23 23 L15 19 Q12 18 9.500 21 L7.500 31.500 H-7.500 L-9.500 21 Q-12 18 -15 19 L-23 23 L-30.500 9.500 L-23.500 4 Q-22 0 -23.500 -4 L-30.500 -9.500 L-23 -23 L-15 -19 Q-12 -18 -9.500 -21 Z" />
    <circle r={9.500} />
  </svg>
)

const InfoIcon = () => (
  <svg width={46} height={46} viewBox="-23 -23 46 46" fill="none" stroke="#0765cf">
    <circle r={21.500} strokeWidth={3} />
    <circle cy={-10.500} r={2} fill="#0765cf" />
    <path d="M-4 -3 H1 V11 M-5 11 H6" strokeWidth={4} strokeLinecap="round" />
  </svg>
)

const LinkIcon = () => (
  <svg width={70} height={56} viewBox="0 0 70 56" fill="none" stroke="#3bf561" strokeWidth={7}>
    <path d="M15 38 Q4 33 4 20 Q4 5 19 5 H33 Q49 5 49 21 Q49 38 29 37" />
    <path d="M41 19 Q22 18 22 35 Q22 51 38 51 H50 Q66 51 66 35 Q66 24 55 19" />
  </svg>
)

const LocationIcon = () => (
  <svg width={38} height={38} viewBox="0 0 38 38">
    <path d="M2 16 L33 1 Q38 -1 37 4 L23 35 Q19 40 18 34 V21 Q18 20 17 20 H4 Q-2 19 2 16 Z" />
  </svg>
)

const SignalIcon = () => (
  <svg width={54} height={36} viewBox="0 0 54 36">
    <rect y={23} width={9} height={13} rx={3} />
    <rect x={15} y={16} width={9} height={20} rx={3} />
    <rect x={30} y={9} width={9} height={27} rx={3} />
    <rect x={45} y={1} width={9} height={35} rx={3} fill="#999999" />
  </svg>
)

/* ---------- data ---------- */

const days = [
  { step: -4, date: "máj. 22.", weekday: "P" },
  { step: -3, date: "máj. 23.", weekday: "Szo" },
  { step: -2, date: "máj. 24.", weekday: "V" },
  { step: -1, date: "máj. 25.", weekday: "H" },
  { step: 0, date: "ma", weekday: "" },
  { step: 1, date: "máj. 27.", weekday: "Sze" },
  { step: 2, date: "máj. 28.", weekday: "Cs" },
  { step: 3, date: "máj. 29.", weekday: "P" },
  { step: 4, date: "máj. 30.", weekday: "Szo" },
]

const hours = [4, 5, 6, 7, 8, 9, 10, 11, 12]
const minutes = [47, 48, 49, 50, 51, 52, 53, 54, 55]

const NumberColumn = ({ label, values }: { label: string; values: number[] }) => (
  <Column role="listbox" aria-label={label}>
    {values.map((value, index) => (
      <NumberOption key={value} role="option" aria-selected={index === 4} $step={index - 4} $past={index < 4}>
        {value}
      </NumberOption>
    ))}
  </Column>
)

const DateDialog = () => (
  <Overlay>
    <DialogShadow>
      <Dialog role="dialog" aria-labelledby="date-title">
        <FrostedMap />
        <DialogContent>
          <DialogTitle id="date-title">Kérjük, válassza ki a dátumot</DialogTitle>
          <Wheel>
            <Lens />
            <Column role="listbox" aria-label="Nap">
              {days.map(({ step, date, weekday }) => (
                <Option key={step} role="option" aria-selected={step === 0} $step={step} $past={step < 0}>
                  {weekday ? (
                    <>
                      <span>{date}</span>
                      <Weekday $step={step}>{weekday}</Weekday>
                    </>
                  ) : (
                    <Today>{date}</Today>
                  )}
                </Option>
              ))}
            </Column>
            <NumberColumn label="Óra" values={hours} />
            <NumberColumn label="Perc" values={minutes} />
          </Wheel>
          <DialogActions>
            <DialogButton type="button">Mégse</DialogButton>
            <DialogButton type="button" $primary>MEGERŐSÍT</DialogButton>
          </DialogActions>
        </DialogContent>
      </Dialog>
    </DialogShadow>
  </Overlay>
)

export default function App() {
  return (
    <>
      <GlobalStyle />
      <Screen>
        <Stage>
          <CityMap />
          <StageContent>
            <StatusBar>
              <StatusSide>
                <Clock>8:51</Clock>
                <LocationIcon />
              </StatusSide>
              <Island>
                <LinkIcon />
              </Island>
              <StatusSide $end>
                <SignalIcon />
                <Network>5G</Network>
                <Battery>
                  <BatteryBody>65</BatteryBody>
                  <svg width={5} height={14} viewBox="0 0 5 14">
                    <path d="M0 0 Q5 3 5 7 Q5 11 0 14 Z" fill="#8f8f8f" />
                  </svg>
                </Battery>
              </StatusSide>
            </StatusBar>
            <Title>Foglalja le utazását</Title>
            <RouteCard>
              <RouteTrack>
                <StartDot />
                <TrackLine />
                <EndSquare />
              </RouteTrack>
              <RouteStops>
                <Stop>Budaörs, Keleti u. 1, 2040 Hungary</Stop>
                <StopDivider />
                <Stop $large>Budapest, Nyugati pályaudvar, Hungary</Stop>
              </RouteStops>
            </RouteCard>
            <VehicleCard>
              <VehicleInfo>
                <VehicleLines>
                  <Line>Férőhelyek: ...</Line>
                  <Line>Típus: Norm...</Line>
                </VehicleLines>
                <InfoButton type="button" aria-label="Információ">
                  <InfoIcon />
                </InfoButton>
              </VehicleInfo>
              <Line>{"  500Ft / km"}</Line>
              <Line>(Nem érhető el)</Line>
            </VehicleCard>
          </StageContent>
        </Stage>
        <Footer>
          <BookingActions>
            <BookingButton type="button">Foglalás későbbre</BookingButton>
            <BookingButton type="button" $primary>Azonnali foglalás</BookingButton>
          </BookingActions>
          <TabBar>
            <Tab href="#home" $active>
              <TabIcon><HomeIcon /></TabIcon>
              Kezdőlap
            </Tab>
            <Tab href="#bookings">
              <TabIcon>
                <ListIcon />
                <Badge>2</Badge>
              </TabIcon>
              Saját foglalásaim
            </Tab>
            <Tab href="#settings">
              <TabIcon><GearIcon /></TabIcon>
              Beállítások
            </Tab>
          </TabBar>
        </Footer>
        <DateDialog />
      </Screen>
    </>
  )
}
